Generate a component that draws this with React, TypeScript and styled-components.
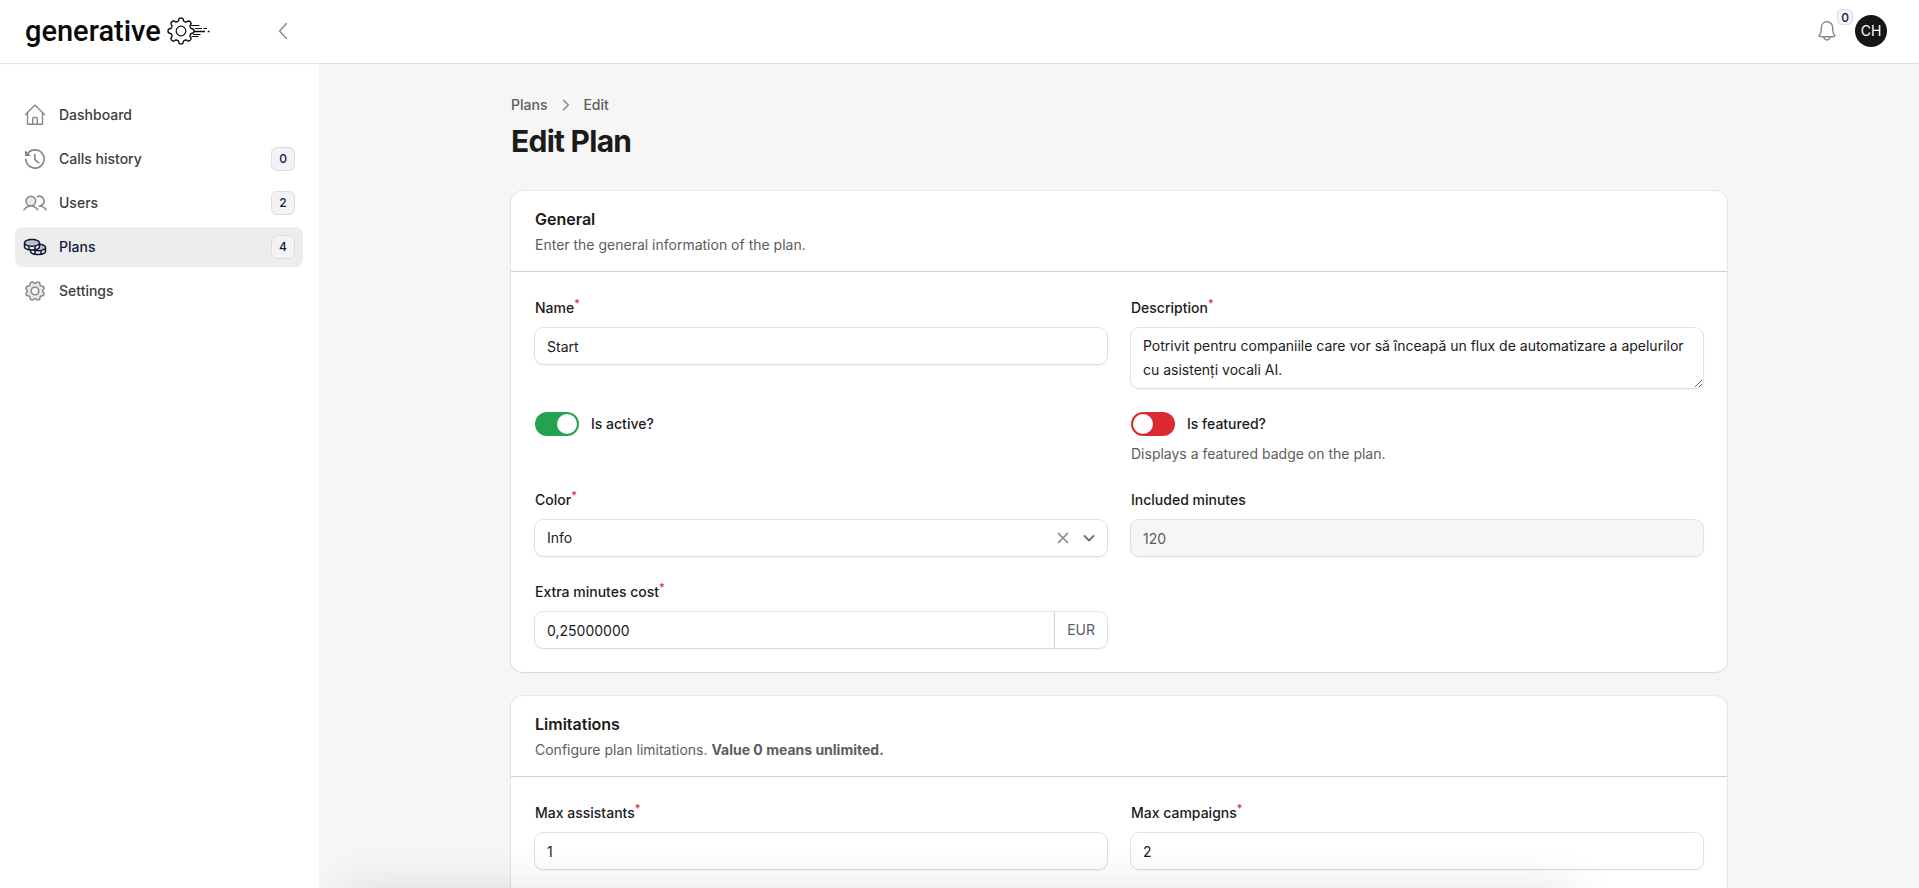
import React, { useId, useState } from "react";
import styled, { createGlobalStyle } from "styled-components";
import { PiCoinsDuotone, PiUsersDuotone } from "react-icons/pi";

const ink = "#1b1b1b";
const muted = "#5d5d5d";
const ring = "rgba(9, 9, 11, 0.1)";

const GlobalStyle = createGlobalStyle`
  *, *::before, *::after { box-sizing: border-box; }
  html { height: 100%; }
  body {
    margin: 0;
    height: 100%;
    background: #f6f6f6;
    color: ${ink};
    font: 400 14px/24px Inter, "Liberation Sans", sans-serif;
  }
  #root { height: 100%; }
  button, input, textarea, select { font: inherit; color: inherit; }
  h1, h2, p { margin: 0; }
`;

const Page = styled.div`
  position: relative;
  display: flex;
  flex-direction: column;
  height: 100%;
  overflow: hidden;
`;

const Topbar = styled.header`
  position: relative;
  flex: none;
  display: flex;
  align-items: center;
  height: 63px;
  padding: 0 32px 1px 25px;
  background: #fff;
  box-shadow: 0 0 0 1px rgba(9, 9, 11, 0.07), 0 1px 2px rgba(0, 0, 0, 0.05);
`;

const Brand = styled.a`
  display: flex;
  align-items: center;
  gap: 5px;
  width: 246px;
  color: #0a0a0a;
  font: 500 29px/32px Roboto, sans-serif;
  text-decoration: none;
`;

const IconButton = styled.button`
  position: relative;
  display: grid;
  place-items: center;
  width: 24px;
  height: 24px;
  padding: 0;
  border: 0;
  background: none;
  color: #888;
  cursor: pointer;
`;

const Account = styled.div`
  display: flex;
  align-items: center;
  gap: 16px;
  margin-left: auto;
`;

const Badge = styled.span<{ $small?: boolean }>`
  display: grid;
  place-items: center;
  width: ${(p) => (p.$small ? 16 : 24)}px;
  height: ${(p) => (p.$small ? 16 : 24)}px;
  border: 1px solid #dcdde5;
  border-radius: ${(p) => (p.$small ? 5 : 6)}px;
  background: #f3f3f7;
  color: #0f1b3d;
  font-size: 12px;
  font-weight: 500;
  line-height: 16px;
`;

const BellCount = styled.span`
  position: absolute;
  left: 22px;
  bottom: 18px;
`;

const Avatar = styled.button`
  width: 32px;
  height: 32px;
  padding: 0;
  border: 0;
  border-radius: 50%;
  background: #161616;
  color: #fff;
  font-size: 14px;
  line-height: 32px;
  cursor: pointer;
`;

const Body = styled.div`
  flex: 1;
  min-height: 0;
  display: flex;
`;

const Sidebar = styled.nav`
  flex: none;
  width: 319px;
  padding: 32px 16px 32px 15px;
  background: #fff;
`;

const NavList = styled.ul`
  display: flex;
  flex-direction: column;
  gap: 4px;
  margin: 0;
  padding: 0;
  list-style: none;
`;

const NavLink = styled.a<{ $active?: boolean }>`
  display: flex;
  align-items: center;
  gap: 12px;
  height: 40px;
  padding: 0 8px;
  border-radius: 8px;
  background: ${(p) => (p.$active ? "#ededed" : "transparent")};
  color: ${(p) => (p.$active ? "#0f1b3d" : "#3d3d3d")};
  font-weight: 500;
  text-decoration: none;

  svg { color: ${(p) => (p.$active ? "#0f1b3d" : "#888")}; }
`;

const NavText = styled.span`
  flex: 1;
`;

const Main = styled.main`
  flex: 1;
  min-width: 0;
  overflow-y: auto;
  scrollbar-width: none;
`;

const Content = styled.div`
  display: flex;
  flex-direction: column;
  max-width: 1280px;
  margin: 0 auto;
  padding: 32px;
`;

const Crumbs = styled.nav`
  display: flex;
  align-items: center;
  gap: 12px;
  margin-bottom: 8px;
  color: ${muted};
  font-weight: 500;
  line-height: 20px;

  a { color: inherit; text-decoration: none; }
  svg { color: #888; }
`;

const Title = styled.h1`
  margin-bottom: 32px;
  font-size: 30px;
  font-weight: 700;
  line-height: 36px;
  letter-spacing: -0.025em;
`;

const Form = styled.form`
  display: flex;
  flex-direction: column;
  gap: 24px;
`;

const Card = styled.section`
  border-radius: 12px;
  background: #fff;
  box-shadow: 0 0 0 1px rgba(9, 9, 11, 0.06), 0 1px 2px rgba(0, 0, 0, 0.07);
`;

const CardHead = styled.header`
  padding: 16px 24px;
  border-bottom: 1px solid #d1d1d1;
`;

const CardTitle = styled.h2`
  margin-bottom: 4px;
  font-size: 16px;
  font-weight: 600;
  line-height: 24px;
`;

const Note = styled.p`
  color: ${muted};
  line-height: 20px;
`;

const Grid = styled.div<{ $roomy?: boolean }>`
  display: grid;
  grid-template-columns: repeat(2, minmax(0, 1fr));
  align-items: start;
  gap: 24px;
  padding: 24px 24px ${(p) => (p.$roomy ? 96 : 24)}px;
`;

const FieldBox = styled.div`
  display: flex;
  flex-direction: column;
  gap: 8px;
`;

const Label = styled.label`
  align-self: flex-start;
  font-weight: 500;
  line-height: 24px;
`;

const Star = styled.sup`
  color: #dc262c;
  font-size: 11px;
  line-height: 0;
`;

const Shell = styled.div<{ $disabled?: boolean }>`
  position: relative;
  display: flex;
  border-radius: 8px;
  background: ${(p) => (p.$disabled ? "#f6f6f6" : "#fff")};
  color: ${(p) => (p.$disabled ? muted : ink)};
  box-shadow: 0 0 0 1px ${ring}, 0 1px 2px 1px rgba(0, 0, 0, 0.04);
`;

const Input = styled.input`
  flex: 1;
  min-width: 0;
  height: 36px;
  padding: 6px 12px;
  border: 0;
  border-radius: 8px;
  background: transparent;
  outline-color: #0f1b3d;
`;

const TextArea = styled.textarea`
  display: block;
  width: 100%;
  height: 60px;
  padding: 6px 12px;
  border: 0;
  border-radius: 8px;
  background: transparent;
  resize: vertical;
  outline-color: #0f1b3d;
`;

const Select = styled.select`
  flex: 1;
  height: 36px;
  padding: 6px 60px 6px 12px;
  border: 0;
  border-radius: 8px;
  background: transparent;
  appearance: none;
`;

const SelectTools = styled.div`
  position: absolute;
  top: 0;
  right: 6px;
  display: flex;
  align-items: center;
  gap: 2px;
  height: 36px;
  pointer-events: none;

  button { pointer-events: auto; }
`;

const ChevronSlot = styled.span`
  display: grid;
  place-items: center;
  width: 24px;
  color: #6b7280;
`;

const Suffix = styled.span`
  padding: 6px 12px;
  border-left: 1px solid #d1d1d1;
  color: ${muted};
`;

const ToggleRow = styled.label`
  display: flex;
  align-items: center;
  gap: 12px;
  align-self: flex-start;
  font-weight: 500;
`;

const Switch = styled.input`
  appearance: none;
  width: 44px;
  height: 24px;
  margin: 0;
  border-radius: 12px;
  background: #dc2a30;
  cursor: pointer;

  &::before {
    content: "";
    display: block;
    width: 20px;
    height: 20px;
    margin: 2px;
    border-radius: 50%;
    background: #fff;
  }
  &:checked { background: #23a34e; }
  &:checked::before { margin-left: 22px; }
`;

const BottomShade = styled.div`
  position: absolute;
  top: 100%;
  left: 18%;
  right: 18%;
  height: 80px;
  box-shadow: 0 0 48px rgba(0, 0, 0, 0.11);
  pointer-events: none;
`;

/* Closed outline of a wheel with eight soft teeth round (cx, cy). */
const cogPath = (cx: number, cy: number, radius: number, depth: number, turn: number) => {
  const points = Array.from({ length: 160 }, (_, i) => {
    const angle = (i / 160) * Math.PI * 2;
    const r = radius + depth * Math.tanh(2 * Math.cos(8 * (angle - turn)));
    return `${(cx + r * Math.cos(angle)).toFixed(2)} ${(cy + r * Math.sin(angle)).toFixed(2)}`;
  });
  return `M${points.join("L")}Z`;
};

const logoCog = cogPath(15, 15, 11.5, 1.5, 0);
const settingsCog = cogPath(12, 12, 8.7, 0.9, Math.PI / 8);

const GearMark = () => (
  <svg width="44" height="30" viewBox="0 0 44 30" fill="none" stroke="currentColor" strokeWidth="1.4" aria-hidden="true">
    <path d={logoCog} />
    <circle cx="15" cy="15" r="4.800" strokeWidth="1.200" />
    <path strokeWidth="1" d="M25 9.500H33.500M29 12.500H36M37.500 12.500h3.500M27 18.500H34.500M25.500 20.500h7" />
    <path strokeWidth="1.700" d="M28 15.500h11M41.800 15.500H43.500" />
  </svg>
);

const HomeIcon = () => (
  <svg width="24" height="24" viewBox="0 0 24 24" fill="none" stroke="currentColor" strokeWidth="1.400" strokeLinecap="round" strokeLinejoin="round" aria-hidden="true">
    <path d="M2.500 11.500 11.300 2.700a1 1 0 0 1 1.400 0L21.500 11.500M4.500 9.800V21.300h15V9.800M9.700 21V15.500a1 1 0 0 1 1-1h2.600a1 1 0 0 1 1 1V21" />
  </svg>
);

const HistoryIcon = () => (
  <svg width="24" height="24" viewBox="0 0 24 24" fill="none" stroke="currentColor" strokeWidth="1.700" strokeLinecap="round" strokeLinejoin="round" aria-hidden="true">
    <path d="M2.900 12.300A9.100 9.100 0 1 0 4.600 6.700" />
    <path d="M11.800 7.500v5l3.800 3.200" />
    <path fill="currentColor" stroke="none" d="M2 3.300V9h6Z" />
  </svg>
);

const SettingsIcon = () => (
  <svg width="24" height="24" viewBox="0 0 24 24" fill="none" stroke="currentColor" strokeWidth="1.500" aria-hidden="true">
    <path fill="currentColor" fillOpacity="0.200" fillRule="evenodd" d={settingsCog + "M8.200 12a3.800 3.800 0 1 0 7.600 0a3.800 3.800 0 1 0-7.600 0Z"} />
  </svg>
);

const BellIcon = () => (
  <svg width="24" height="24" viewBox="0 0 24 24" fill="none" stroke="currentColor" strokeWidth="1.400" strokeLinejoin="round" aria-hidden="true">
    <path d="M12 2.800c-3.300 0-5.700 2.600-5.700 6v2.500c0 2.400-.9 3.900-2.300 5.400.6.700 1.600 1 2.700 1h10.600c1.100 0 2.100-.3 2.700-1-1.400-1.500-2.300-3-2.300-5.400V8.800c0-3.400-2.400-6-5.700-6Z" />
    <path d="M8.800 17.800c.2 1.900 1.500 3.200 3.200 3.200s3-1.300 3.200-3.200" />
  </svg>
);

const Stroke = ({ d, size = 12, width = 1.5 }: { d: string; size?: number; width?: number }) => (
  <svg width={size} height={size} viewBox="0 0 12 12" fill="none" stroke="currentColor" strokeWidth={width} strokeLinecap="round" strokeLinejoin="round" aria-hidden="true">
    <path d={d} />
  </svg>
);

const navItems = [
  { label: "Dashboard", icon: <HomeIcon /> },
  { label: "Calls history", icon: <HistoryIcon />, count: 0 },
  { label: "Users", icon: <PiUsersDuotone size={24} />, count: 2 },
  { label: "Plans", icon: <PiCoinsDuotone size={24} />, count: 4, active: true },
  { label: "Settings", icon: <SettingsIcon /> },
];

type FieldProps = {
  label: string;
  required?: boolean;
  disabled?: boolean;
  children: (id: string) => React.ReactNode;
};

const Field = ({ label, required, disabled, children }: FieldProps) => {
  const id = useId();
  return (
    <FieldBox>
      <Label htmlFor={id}>
        {label}
        {required && <Star>*</Star>}
      </Label>
      <Shell $disabled={disabled}>{children(id)}</Shell>
    </FieldBox>
  );
};

export default function App() {
  const [color, setColor] = useState("Info");

  return (
    <Page>
      <GlobalStyle />
      <Topbar>
        <Brand href="#">
          generative
          <GearMark />
        </Brand>
        <IconButton type="button" aria-label="Collapse sidebar">
          <Stroke d="M8.300 1 3.700 6l4.600 5" size={18} width={0.9} />
        </IconButton>
        <Account>
          <IconButton type="button" aria-label="Notifications">
            <BellIcon />
            <BellCount>
              <Badge $small>0</Badge>
            </BellCount>
          </IconButton>
          <Avatar type="button">CH</Avatar>
        </Account>
      </Topbar>
      <Body>
        <Sidebar>
          <NavList>
            {navItems.map((item) => (
              <li key={item.label}>
                <NavLink href="#" $active={item.active}>
                  {item.icon}
                  <NavText>{item.label}</NavText>
                  {item.count !== undefined && <Badge>{item.count}</Badge>}
                </NavLink>
              </li>
            ))}
          </NavList>
        </Sidebar>
        <Main>
          <Content>
            <Crumbs>
              <a href="#">Plans</a>
              <Stroke d="M4.500 1.200 9.300 6 4.500 10.800" width={1.500} />
              <a href="#">Edit</a>
            </Crumbs>
            <Title>Edit Plan</Title>
            <Form>
              <Card>
                <CardHead>
                  <CardTitle>General</CardTitle>
                  <Note>Enter the general information of the plan.</Note>
                </CardHead>
                <Grid>
                  <Field label="Name" required>
                    {(id) => <Input id={id} defaultValue="Start" />}
                  </Field>
                  <Field label="Description" required>
                    {(id) => (
                      <TextArea
                        id={id}
                        defaultValue="Potrivit pentru companiile care vor să înceapă un flux de automatizare a apelurilor cu asistenți vocali AI."
                      />
                    )}
                  </Field>
                  <FieldBox>
                    <ToggleRow>
                      <Switch type="checkbox" role="switch" defaultChecked />
                      Is active?
                    </ToggleRow>
                  </FieldBox>
                  <FieldBox>
                    <ToggleRow>
                      <Switch type="checkbox" role="switch" />
                      Is featured?
                    </ToggleRow>
                    <Note>Displays a featured badge on the plan.</Note>
                  </FieldBox>
                  <Field label="Color" required>
                    {(id) => (
                      <>
                        <Select id={id} value={color} onChange={(e) => setColor(e.target.value)}>
                          <option value="" />
                          <option>Info</option>
                        </Select>
                        <SelectTools>
                          <IconButton type="button" aria-label="Clear color" onClick={() => setColor("")}>
                            <Stroke d="M1.500 1.500l9 9M10.500 1.500l-9 9" width={1.700} />
                          </IconButton>
                          <ChevronSlot>
                            <Stroke d="M1.500 4 6 8.500 10.500 4" width={1.900} />
                          </ChevronSlot>
                        </SelectTools>
                      </>
                    )}
                  </Field>
                  <Field label="Included minutes" disabled>
                    {(id) => <Input id={id} defaultValue="120" disabled />}
                  </Field>
                  <Field label="Extra minutes cost" required>
                    {(id) => (
                      <>
                        <Input id={id} defaultValue="0,25000000" />
                        <Suffix>EUR</Suffix>
                      </>
                    )}
                  </Field>
                </Grid>
              </Card>
              <Card>
                <CardHead>
                  <CardTitle>Limitations</CardTitle>
                  <Note>
                    Configure plan limitations. <strong>Value 0 means unlimited.</strong>
                  </Note>
                </CardHead>
                <Grid $roomy>
                  <Field label="Max assistants" required>
                    {(id) => <Input id={id} defaultValue="1" />}
                  </Field>
                  <Field label="Max campaigns" required>
                    {(id) => <Input id={id} defaultValue="2" />}
                  </Field>
                </Grid>
              </Card>
            </Form>
          </Content>
        </Main>
      </Body>
      <BottomShade />
    </Page>
  );
}
